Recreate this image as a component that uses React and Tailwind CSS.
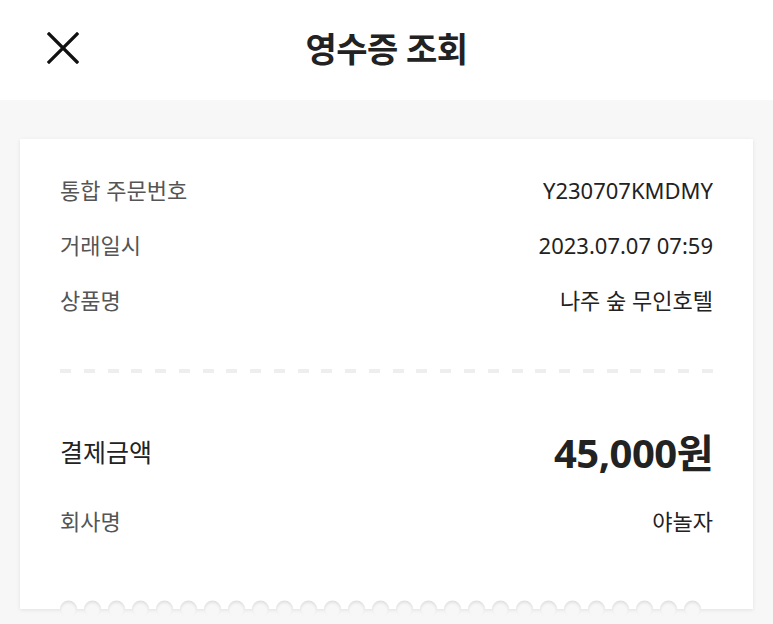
import React from "react";

const FONT = "font-['Noto_Sans','Noto_Sans_CJK_KR',sans-serif]";

const ROWS = [
  { label: "통합 주문번호", value: "Y230707KMDMY" },
  { label: "거래일시", value: "2023.07.07 07:59" },
  { label: "상품명", value: "나주 숲 무인호텔" },
];

function CloseIcon() {
  return (
    <svg width="32" height="32" viewBox="0 0 32 32" fill="none">
      <path d="M2 2L30 30M30 2L2 30" stroke="#111" strokeWidth="3.2" strokeLinecap="square" />
    </svg>
  );
}

export default function App() {
  return (
    <div className={`w-[773px] h-[624px] overflow-hidden bg-[#f7f7f7] ${FONT}`}>
      {/* Header */}
      <header className="relative h-[100px] bg-white flex items-center justify-center">
        <button className="absolute left-[47px] top-[32px]" aria-label="닫기">
          <CloseIcon />
        </button>
        <h1 className="text-[34px] font-bold text-[#222] tracking-[-0.5px] mt-[-2px]">영수증 조회</h1>
      </header>

      {/* Receipt card */}
      <div className="px-5 pt-[39px]">
        <div className="relative bg-white shadow-[0_1px_4px_rgba(0,0,0,0.09)] px-10 pt-6 pb-[60px]">
          {ROWS.map((row) => (
            <div key={row.label} className="h-[55px] flex items-center justify-between">
              <span className="text-[22px] text-[#555]">{row.label}</span>
              <span className="text-[22px] text-[#222]">{row.value}</span>
            </div>
          ))}

          {/* dashed divider */}
          <div className="mt-[41px] flex justify-between">
            {Array.from({ length: 28 }).map((_, i) => (
              <div key={i} className="w-[11px] h-[4px] bg-[#eeeeee]" />
            ))}
          </div>

          <div className="mt-[50px] h-[60px] flex items-center justify-between">
            <span className="text-[25px] text-[#222]">결제금액</span>
            <span className="text-[40px] font-bold text-[#222] tracking-[-0.5px]">45,000원</span>
          </div>

          <div className="mt-[11px] h-[55px] flex items-center justify-between">
            <span className="text-[22px] text-[#555]">회사명</span>
            <span className="text-[22px] text-[#222]">야놀자</span>
          </div>

          {/* scalloped bottom edge */}
          <div className="absolute left-[40px] bottom-0 translate-y-1/2 flex gap-[7px]">
            {Array.from({ length: 27 }).map((_, i) => (
              <div
                key={i}
                className="w-[17px] h-[17px] rounded-full bg-[#f7f7f7] shadow-[inset_0_2px_3px_rgba(0,0,0,0.1)]"
              />
            ))}
          </div>
        </div>
      </div>
    </div>
  );
}
